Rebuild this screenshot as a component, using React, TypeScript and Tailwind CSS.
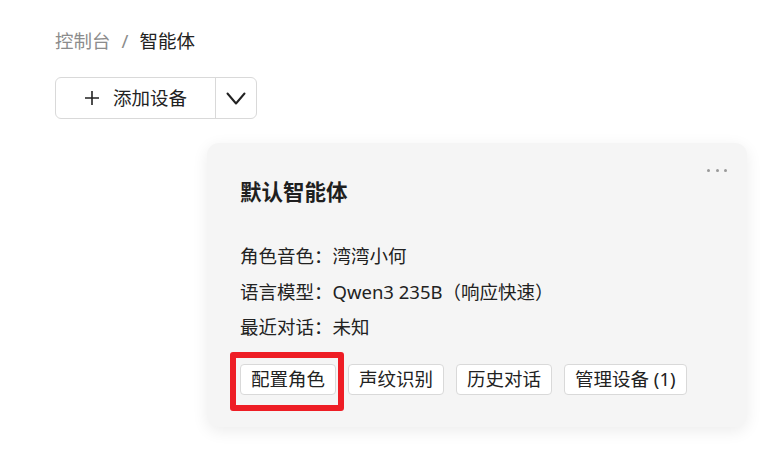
import React from 'react';

const font = { fontFamily: '"Noto Sans", "Noto Sans CJK SC", sans-serif' };

const actions = ['配置角色', '声纹识别', '历史对话', '管理设备 (1)'];

const App = () => {
  return (
    <div className="min-h-screen bg-white text-[#222]" style={font}>
      {/* Breadcrumb */}
      <div className="pl-[55px] pt-[29px] flex items-center text-[18.5px] leading-[24px]">
        <span className="text-[#8c8c8c]">控制台</span>
        <span className="text-[#8c8c8c] mx-[11px]">/</span>
        <span className="text-[#222]">智能体</span>
      </div>

      {/* Add device */}
      <div className="ml-[55px] mt-[24px] flex w-[202px] h-[42px] rounded-[6px] border border-[#d9d9d9] bg-white">
        <button className="flex-1 flex items-center justify-center gap-[13px] text-[18.5px]">
          <svg width="16" height="16" viewBox="0 0 16 16" fill="none" stroke="#222" strokeWidth="1.6">
            <path d="M8 1v14M1 8h14" />
          </svg>
          <span>添加设备</span>
        </button>
        <div className="w-px bg-[#d9d9d9]" />
        <button className="w-[40px] flex items-center justify-center">
          <svg width="20" height="13" viewBox="0 0 20 13" fill="none" stroke="#222" strokeWidth="2" strokeLinecap="round" strokeLinejoin="round">
            <path d="M1.5 1.5l8.5 10 8.5-10" />
          </svg>
        </button>
      </div>

      {/* Agent card */}
      <div className="relative ml-[207px] mt-[24px] w-[540px] h-[284px] rounded-[12px] bg-[#f5f5f5] shadow-[0_4px_16px_rgba(0,0,0,0.08)] pl-[33px] pt-[34px]">
        <div className="absolute right-[20px] top-[26px] flex gap-[5.5px]">
          <span className="w-[3px] h-[3px] rounded-full bg-[#9a9a9a]" />
          <span className="w-[3px] h-[3px] rounded-full bg-[#9a9a9a]" />
          <span className="w-[3px] h-[3px] rounded-full bg-[#9a9a9a]" />
        </div>

        <h2 className="text-[21.5px] leading-[30px] font-semibold text-[#1f1f1f]">默认智能体</h2>

        <div className="mt-[31px] text-[18.5px] leading-[35.5px] text-[#222]">
          <p>角色音色：湾湾小何</p>
          <p>语言模型：Qwen3 235B（响应快速）</p>
          <p>最近对话：未知</p>
        </div>

        <div className="mt-[19px] flex gap-[12px]">
          {actions.map((label, i) => (
            <div key={label} className="relative">
              <button className="h-[31px] px-[10px] rounded-[4px] border border-[#d9d9d9] bg-white text-[18.5px] leading-none text-[#222] whitespace-nowrap">
                {label}
              </button>
              {i === 0 && (
                <div className="absolute -left-[10px] -top-[12px] w-[114px] h-[59px] border-[6px] border-[#ee1d25] rounded-[3px] pointer-events-none" />
              )}
            </div>
          ))}
        </div>
      </div>
    </div>
  );
};

export default App;
